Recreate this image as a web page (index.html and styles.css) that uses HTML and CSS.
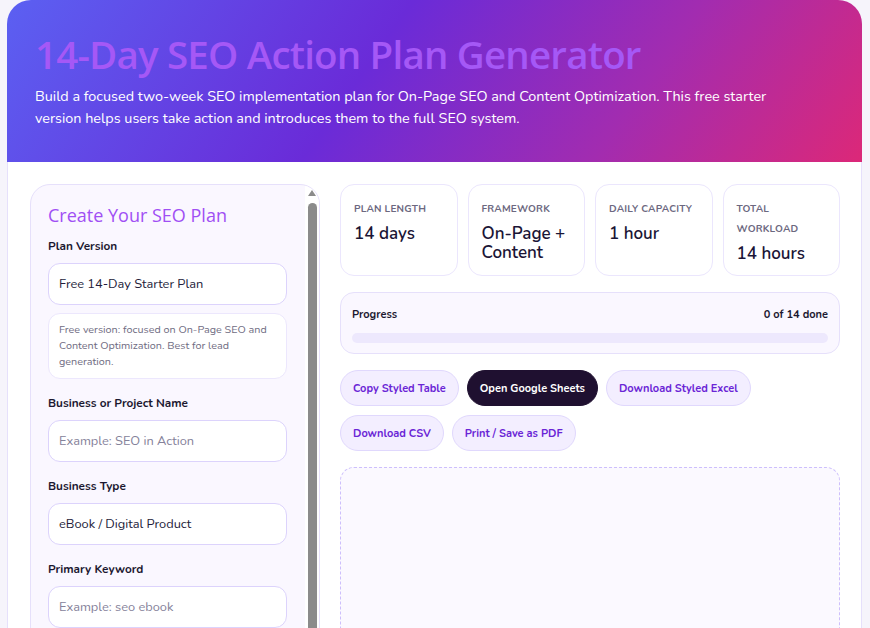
FILE: index.html
```html
<!DOCTYPE html>
<html lang="en">
<head>
    <meta charset="UTF-8">
    <title>14-Day SEO Action Plan Generator</title>
    <link rel="stylesheet" href="styles.css">
</head>
<body>
<div class="app">
    <header class="hero">
        <h1>14-Day SEO Action Plan Generator</h1>
        <p>Build a focused two-week SEO implementation plan for On-Page SEO and Content Optimization. This free starter version helps users take action and introduces them to the full SEO system.</p>
    </header>

    <main class="layout">
        <aside class="panel">
            <div class="panel-body">
                <h2 class="panel-title">Create Your SEO Plan</h2>

                <div class="field">
                    <label class="field-label">Plan Version</label>
                    <div class="input">Free 14-Day Starter Plan</div>
                    <div class="note">Free version: focused on On-Page SEO and Content Optimization. Best for lead generation.</div>
                </div>

                <div class="field">
                    <label class="field-label">Business or Project Name</label>
                    <div class="input placeholder">Example: SEO in Action</div>
                </div>

                <div class="field">
                    <label class="field-label">Business Type</label>
                    <div class="input">eBook / Digital Product</div>
                </div>

                <div class="field">
                    <label class="field-label">Primary Keyword</label>
                    <div class="input placeholder">Example: seo ebook</div>
                </div>

                <div class="field">
                    <label class="field-label">Target Audience</label>
                    <div class="input placeholder">Example: small business owners</div>
                </div>
            </div>
            <!-- scrollbar of the form panel -->
            <div class="scrollbar">
                <div class="scroll-arrow"></div>
                <div class="scroll-thumb"></div>
            </div>
        </aside>

        <section class="results">
            <div class="stats">
                <div class="stat">
                    <div class="stat-label">Plan Length</div>
                    <div class="stat-value">14 days</div>
                </div>
                <div class="stat">
                    <div class="stat-label">Framework</div>
                    <div class="stat-value">On-Page + Content</div>
                </div>
                <div class="stat">
                    <div class="stat-label">Daily Capacity</div>
                    <div class="stat-value">1 hour</div>
                </div>
                <div class="stat">
                    <div class="stat-label">Total Workload</div>
                    <div class="stat-value">14 hours</div>
                </div>
            </div>

            <div class="progress">
                <div class="progress-head">
                    <span>Progress</span>
                    <span>0 of 14 done</span>
                </div>
                <div class="progress-bar"><div class="progress-fill" style="width: 0%"></div></div>
            </div>

            <div class="actions">
                <button class="btn">Copy Styled Table</button>
                <button class="btn btn-dark">Open Google Sheets</button>
                <button class="btn">Download Styled Excel</button>
                <button class="btn">Download CSV</button>
                <button class="btn">Print / Save as PDF</button>
            </div>

            <div class="output"></div>
        </section>
    </main>
</div>
</body>
</html>
```

FILE: styles.css
```css
* {
    margin: 0;
    padding: 0;
    box-sizing: border-box;
}

html, body {
    height: 100%;
    overflow: hidden;
}

body {
    background: #f6f4fb;
    font-family: "Nunito", "Lato", sans-serif;
    color: #1c1830;
    padding: 0 8px 0 7px;
}

.app {
    background: #fff;
    border: 1px solid #e6e0fb;
    border-top: 0;
    border-radius: 24px 24px 0 0;
    min-height: 100%;
}

/* header */
.hero {
    background: linear-gradient(125deg, #5b60f2 0%, #6a2bd8 42%, #a22cb0 72%, #dc2878 100%);
    border-radius: 24px 24px 0 0;
    padding: 30px 28px 33px;
    margin: 0 -1px;
}

.hero h1 {
    font-family: "Open Sans", "Noto Sans", sans-serif;
    font-weight: 600;
    font-size: 38.5px;
    line-height: 48px;
    letter-spacing: -0.8px;
    color: #a558f6;
}

.hero p {
    margin-top: 7px;
    max-width: 740px;
    font-size: 14.4px;
    line-height: 22px;
    color: #fff;
}

/* main layout */
.layout {
    display: grid;
    grid-template-columns: 290px 1fr;
    gap: 20px;
    padding: 22px 21px 0 22px;
}

/* left form panel */
.panel {
    height: 760px;
    display: flex;
    overflow: hidden;
    background: #faf7ff;
    border: 1px solid #e6e0fb;
    border-radius: 20px;
}

.panel-body {
    flex: 1;
    padding: 18px 18px 30px 17px;
}

.scrollbar {
    width: 14px;
    background: #fff;
    display: flex;
    flex-direction: column;
    align-items: center;
    padding-top: 5px;
}

.scroll-arrow {
    width: 0;
    height: 0;
    border-left: 4.5px solid transparent;
    border-right: 4.5px solid transparent;
    border-bottom: 6px solid #8b8b8b;
}

.scroll-thumb {
    flex: 1;
    width: 9px;
    margin-top: 7px;
    border-radius: 5px;
    background: #8b8b8b;
}

.panel-title {
    font-family: "Open Sans", "Noto Sans", sans-serif;
    font-weight: 500;
    font-size: 18px;
    line-height: 24px;
    color: #a04ff4;
    margin-bottom: 9px;
}

.field {
    margin-bottom: 14px;
}

.field-label {
    display: block;
    font-size: 11.8px;
    font-weight: 700;
    line-height: 20px;
    margin-bottom: 7px;
}

.input {
    height: 42px;
    background: #fff;
    border: 1px solid #dcd3fc;
    border-radius: 12px;
    padding: 0 10px;
    display: flex;
    align-items: center;
    font-size: 12.8px;
    color: #241c3a;
}

.input.placeholder {
    color: #85829a;
}

.note {
    margin-top: 8px;
    background: #fff;
    border: 1px solid #ece7fd;
    border-radius: 12px;
    padding: 8px 10px;
    font-size: 10.8px;
    line-height: 16px;
    color: #6f6c82;
}

/* right side */
.stats {
    display: grid;
    grid-template-columns: repeat(4, 1fr);
    gap: 10px;
}

.stat {
    border: 1px solid #ebe6fd;
    border-radius: 14px;
    padding: 14px 12px 12px 13px;
    background: #fff;
}

.stat-label {
    font-size: 10px;
    font-weight: 700;
    line-height: 20px;
    letter-spacing: 0.2px;
    text-transform: uppercase;
    color: #6c6880;
}

.stat-value {
    margin-top: 5px;
    font-size: 17px;
    font-weight: 600;
    line-height: 19px;
    color: #1b1536;
}

.progress {
    margin-top: 16px;
    background: #faf7ff;
    border: 1px solid #e6e0fb;
    border-radius: 14px;
    padding: 14px 11px 10px 11px;
}

.progress-head {
    display: flex;
    justify-content: space-between;
    font-size: 11px;
    font-weight: 700;
    line-height: 16px;
}

.progress-bar {
    margin-top: 10px;
    height: 10px;
    border-radius: 999px;
    background: #ede8fd;
    overflow: hidden;
}

.progress-fill {
    height: 100%;
    background: #7c3aed;
}

.actions {
    margin-top: 16px;
    display: flex;
    flex-wrap: wrap;
    gap: 9px 8px;
}

.btn {
    height: 36px;
    padding: 0 12px;
    border: 1px solid #e0d8fd;
    border-radius: 999px;
    background: #f3eeff;
    font-family: inherit;
    font-size: 11px;
    font-weight: 700;
    color: #6a25d6;
    cursor: pointer;
}

.btn-dark {
    background: #1f1030;
    border-color: #1f1030;
    color: #fff;
}

.output {
    margin-top: 16px;
    min-height: 320px;
    border: 1px dashed #cdbffc;
    border-radius: 14px;
    background: #fbf9ff;
}
```
